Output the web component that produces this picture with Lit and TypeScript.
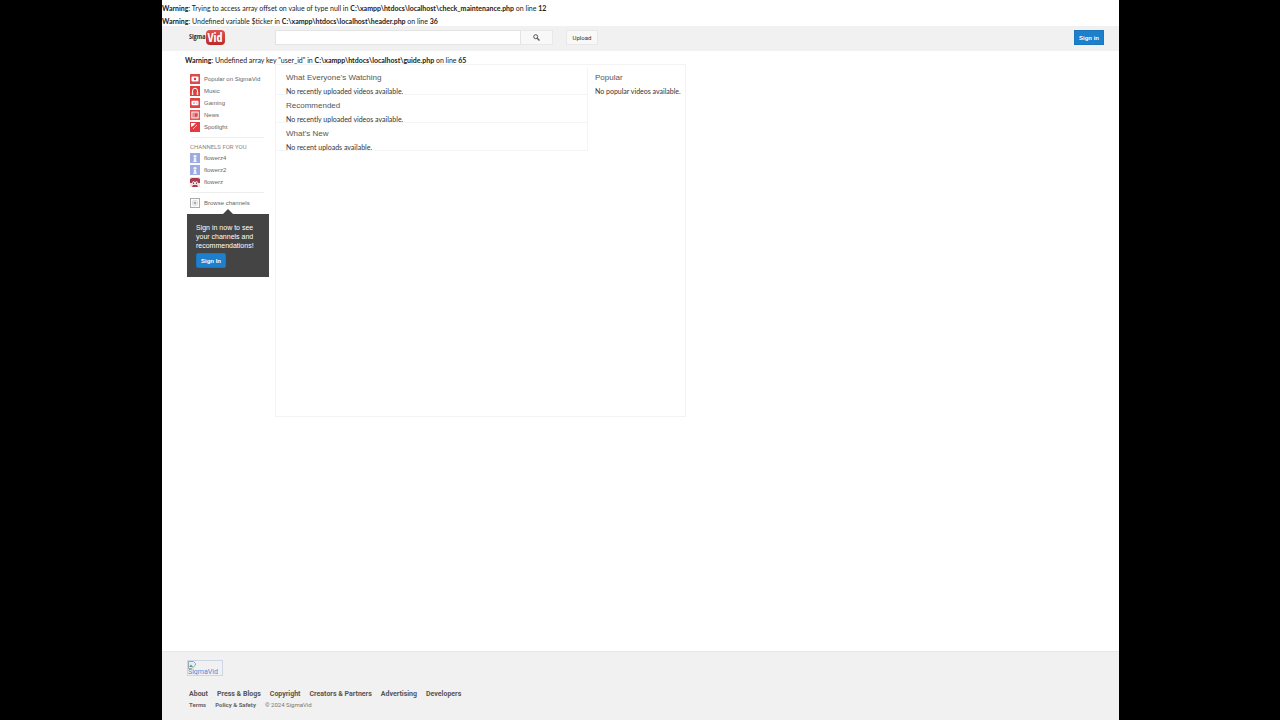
import { LitElement, html, css, svg } from "lit";
import { customElement } from "lit/decorators.js";

const guideIcons: Record<string, unknown> = {
  popular: svg`<rect width="10" height="10" fill="#dc4a50"/><rect x="1.5" y="2.5" width="7" height="5" rx="1" fill="#fff"/><circle cx="5" cy="5" r="1.2" fill="#d13c43"/>`,
  music: svg`<rect width="10" height="10" fill="#dc3f3c"/><path d="M2.500 8V5a2.500 2.800 0 0 1 5 0v3" fill="none" stroke="#fff" stroke-width="1"/><path d="M1.800 6h1.500v3H1.800zM6.700 6h1.500v3H6.700z" fill="#fbe4e2"/>`,
  gaming: svg`<rect width="10" height="10" fill="#dc4448"/><rect x="1.500" y="2.800" width="7" height="4.500" rx="1" fill="#fff"/><path d="M3 5h2M4 4v2M6 5h1.500" stroke="#e58a8d" stroke-width=".8"/>`,
  news: svg`<rect width="10" height="10" fill="#e0585c"/><rect x="1.800" y="2" width="6.400" height="6" fill="#e88a8c" stroke="#fff" stroke-width=".8"/><path d="M5 3.500h2.500v3H5z" fill="#dc4448"/>`,
  spotlight: svg`<rect width="10" height="10" fill="#e03c42"/><path d="M1 1h5L3 4 1 5z" fill="#fff"/><path d="M3 7l4-4" stroke="#f6c3c5" stroke-width="1"/>`,
  person: svg`<rect width="10" height="10" fill="#9dabe3"/><circle cx="5" cy="3.200" r="1.500" fill="#eef1fd"/><path d="M3.800 5h2.400v2.500L7 9H3l.8-1.500z" fill="#eef1fd"/>`,
  avatar: svg`<rect width="10" height="10" fill="#f0dfe1"/><path d="M0 2l2-1h6l2 1v4H8L7 4 5 5 3 4 2 6H0z" fill="#a93a4c"/><path d="M3.500 5.500v1.500M6.500 5.500v1.500" stroke="#5d2735" stroke-width=".8"/><path d="M3 8h4l1 2H2z" fill="#a93a4c"/>`,
  browse: svg`<rect x=".5" y=".5" width="9" height="9" fill="#fff" stroke="#aaa"/><circle cx="5" cy="5" r="2.800" fill="none" stroke="#ddd"/><path d="M5 3.500v3M3.500 5h3" stroke="#888" stroke-width=".9"/>`,
};

const topics = [
  ["popular", "Popular on SigmaVid"],
  ["music", "Music"],
  ["gaming", "Gaming"],
  ["news", "News"],
  ["spotlight", "Spotlight"],
];
const channels = [
  ["person", "flowerz4"],
  ["person", "flowerz2"],
  ["avatar", "flowerz"],
];
const shelves = [
  ["What Everyone's Watching", "No recently uploaded videos available."],
  ["Recommended", "No recently uploaded videos available."],
  ["What's New", "No recent uploads available."],
];
const footerLinks = ["About", "Press & Blogs", "Copyright", "Creators & Partners", "Advertising", "Developers"];

const guideList = (items: string[][]) => html`<ul class="list">
  ${items.map(
    ([icon, label]) => html`<li>
      <a class="guide-link" href="#"><svg class="icon" viewBox="0 0 10 10" aria-hidden="true">${guideIcons[icon]}</svg>${label}</a>
    </li>`
  )}
</ul>`;

@customElement("app-root")
export class AppRoot extends LitElement {
  static styles = css`
    :host {
      display: block;
      background: #000;
      padding: 0 161px 0 162px;
      font-family: Roboto, "Liberation Sans", Arial, sans-serif;
      font-size: 7px;
      color: #333;
    }
    * { box-sizing: border-box; }
    a { color: inherit; text-decoration: none; }
    h2, p, ul { margin: 0; padding: 0; font-weight: normal; }
    ul { list-style: none; }
    button { font: inherit; cursor: pointer; padding: 0; }
    .page {
      display: flex;
      flex-direction: column;
      min-height: 100vh;
      background: #fff;
    }
    .warnings {
      display: flex;
      flex-direction: column;
      gap: 3px;
      padding-top: 3px;
    }
    .warning { line-height: 11px; color: #222; font-family: Lato, "Liberation Sans", sans-serif; }
    .warnings .warning { height: 10px; }
    .masthead {
      display: flex;
      align-items: center;
      height: 25px;
      padding: 0 15px 2px 27px;
      background: #f1f1f1;
    }
    .logo { width: 86px; display: block; }
    .logo svg { display: block; width: 37px; height: 15px; }
    .logo-name { font: bold 7px "Open Sans Condensed", "Liberation Sans", sans-serif; fill: #333; }
    .logo-badge { font: bold 12px "Open Sans Condensed", "Liberation Sans", sans-serif; fill: #fff; }
    .search { display: flex; width: 278px; height: 15px; }
    .search-input {
      flex: 1;
      min-width: 0;
      border: 1px solid #e4e4e4;
      background: #fff;
      font: inherit;
      padding: 0 4px;
    }
    .search-button, .upload {
      border: 1px solid #e8e8e8;
      background: #f8f8f8;
      color: #333;
      font-size: 6px;
    }
    .search-button {
      width: 32px;
      border-left: 0;
      display: flex;
      align-items: center;
      justify-content: center;
    }
    .search-button svg { width: 7px; height: 7px; }
    .upload { width: 32px; height: 15px; margin-left: 13px; }
    .primary {
      width: 30px;
      height: 15px;
      border: 1px solid #1b76bd;
      background: #1c80cc;
      color: #fff;
      font-family: "Liberation Sans", Arial, sans-serif;
      font-size: 6px;
      font-weight: bold;
    }
    .masthead .primary { margin-left: auto; }
    .body { flex: 1; padding: 4px 23px 16px; }
    .body .warning { height: 9px; }
    .columns { display: grid; grid-template-columns: 90px minmax(0, 411px); }
    .guide {
      padding: 9px 7px 0 2px;
      font-family: "Liberation Sans", Arial, sans-serif;
      font-size: 6px;
      color: #666;
    }
    .guide-link {
      display: flex;
      align-items: center;
      gap: 4px;
      height: 12px;
      padding-left: 3px;
      white-space: nowrap;
    }
    .icon { width: 10px; height: 10px; flex: none; }
    .rule { border: 0; border-top: 1px solid #eee; margin: 4px; }
    .guide-title {
      font-family: Roboto, sans-serif;
      font-size: 6px;
      line-height: 10px;
      padding-left: 3px;
      color: #888;
      text-transform: uppercase;
      white-space: nowrap;
    }
    .promo {
      position: relative;
      margin-top: 5px;
      padding: 9px;
      width: 82px;
      background: #444;
      color: #fff;
      font-size: 7px;
    }
    .promo::before {
      content: "";
      position: absolute;
      left: 36px;
      top: -5px;
      border: 5px solid transparent;
      border-top: 0;
      border-bottom-color: #444;
    }
    .promo p { line-height: 9px; margin-bottom: 3px; white-space: nowrap; }
    .promo .primary { display: block; border-radius: 2px; }
    .content {
      display: grid;
      grid-template-columns: minmax(0, 312px) 1fr;
      align-items: start;
      min-height: 353px;
      border: 1px solid #f3f3f3;
      padding-top: 2px;
    }
    .shelves { border-right: 1px solid #f5f5f5; }
    .shelf { height: 28px; padding: 3px 0 0 10px; border-bottom: 1px solid #f5f5f5; }
    .shelf p, .popular p {
      font-family: Lato, "Liberation Sans", sans-serif;
      line-height: 10px;
      white-space: nowrap;
    }
    .shelf-title {
      font-family: "Liberation Sans", Arial, sans-serif;
      font-size: 8px;
      line-height: 16px;
      color: #555;
      white-space: nowrap;
    }
    .popular { padding: 3px 0 0 7px; }
    .footer {
      height: 69px;
      padding: 8px 25px;
      background: #f1f1f1;
      border-top: 1px solid #e8e8e8;
      color: #555;
    }
    .footer-logo {
      display: block;
      width: 36px;
      height: 16px;
      border: 1px solid #ccd6e4;
      color: #3f8fd8;
      line-height: 7px;
      overflow: hidden;
      white-space: nowrap;
    }
    .footer-logo svg { display: block; width: 8px; height: 8px; }
    .footer-links { display: flex; gap: 9px; padding-left: 2px; line-height: 11px; }
    .footer-main { margin-top: 13px; font-weight: bold; }
    .footer-small { line-height: 10px; font-size: 6px; color: #777; }
    .strong { font-weight: bold; color: #666; }
  `;

  render() {
    return html`<div class="page">
      <div class="warnings">
        <p class="warning"><b>Warning</b>: Trying to access array offset on value of type null in <b>C:\\xampp\\htdocs\\localhost\\check_maintenance.php</b> on line <b>12</b></p>
        <p class="warning"><b>Warning</b>: Undefined variable $ticker in <b>C:\\xampp\\htdocs\\localhost\\header.php</b> on line <b>36</b></p>
      </div>
      <header class="masthead">
        <a class="logo" href="#" aria-label="SigmaVid">
          <svg viewBox="0 0 37 15">
            <defs><linearGradient id="g" x2="0" y2="1"><stop stop-color="#dc5550"/><stop offset="1" stop-color="#b92b28"/></linearGradient></defs>
            <text class="logo-name" x="0" y="9">Sigma</text>
            <rect x="17" y="0" width="19" height="15" rx="4" fill="url(#g)"/>
            <text class="logo-badge" x="26" y="12" text-anchor="middle">Vid</text>
          </svg>
        </a>
        <form class="search" role="search" @submit=${(e: Event) => e.preventDefault()}>
          <input class="search-input" type="text" aria-label="Search" />
          <button class="search-button" aria-label="Search">
            <svg viewBox="0 0 7 7"><circle cx="2.700" cy="2.700" r="2" fill="none" stroke="#555"/><path d="M4.200 4.200l2.300 2.300" stroke="#555" stroke-width="1.300"/></svg>
          </button>
        </form>
        <button class="upload">Upload</button>
        <button class="primary">Sign in</button>
      </header>
      <main class="body">
        <p class="warning"><b>Warning</b>: Undefined array key "user_id" in <b>C:\\xampp\\htdocs\\localhost\\guide.php</b> on line <b>65</b></p>
        <div class="columns">
          <nav class="guide" aria-label="Guide">
            ${guideList(topics)}
            <hr class="rule" />
            <h2 class="guide-title">Channels for you</h2>
            ${guideList(channels)}
            <hr class="rule" />
            ${guideList([["browse", "Browse channels"]])}
            <div class="promo">
              <p>Sign in now to see<br />your channels and<br />recommendations!</p>
              <button class="primary">Sign In</button>
            </div>
          </nav>
          <div class="content">
            <div class="shelves">
              ${shelves.map(([t, m]) => html`<section class="shelf"><h2 class="shelf-title">${t}</h2><p>${m}</p></section>`)}
            </div>
            <section class="popular"><h2 class="shelf-title">Popular</h2><p>No popular videos available.</p></section>
          </div>
        </div>
      </main>
      <footer class="footer">
        <a class="footer-logo" href="#">
          <svg viewBox="0 0 8 8" aria-hidden="true"><path d="M.5.500h5l2 2V4L4 7.500H.5z" fill="#e4edf8" stroke="#9aa7b5"/><path d="M1 6l2-2.500L5 6z" fill="#53a35a"/></svg>SigmaVid
        </a>
        <nav class="footer-links footer-main">${footerLinks.map((l) => html`<a href="#">${l}</a>`)}</nav>
        <div class="footer-links footer-small">
          <a class="strong" href="#">Terms</a><a class="strong" href="#">Policy &amp; Safety</a><span>© 2024 SigmaVid</span>
        </div>
      </footer>
    </div>`;
  }
}
